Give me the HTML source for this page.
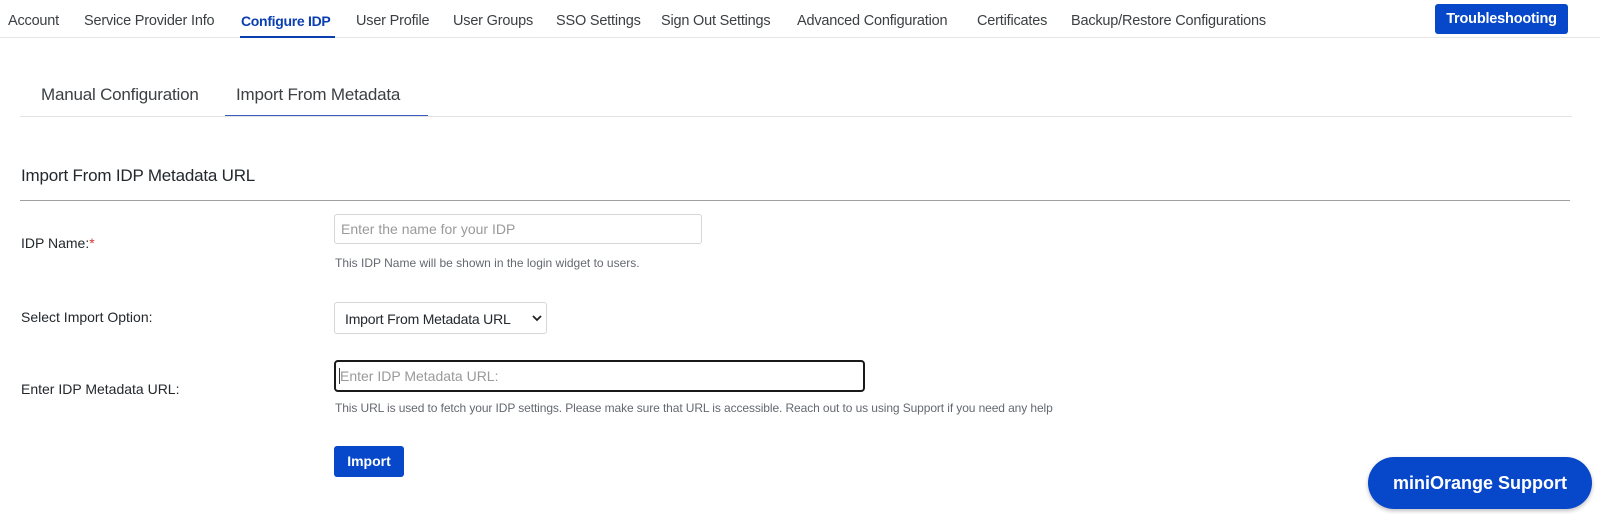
<!DOCTYPE html>
<html><head><meta charset="utf-8"><style>
html,body{margin:0;padding:0;width:1600px;height:514px;background:#fff;overflow:hidden;font-family:"Liberation Sans",Arial,sans-serif;}
.a{position:absolute;white-space:nowrap;}
.nav{top:13px;font-size:14.5px;color:#3c4043;letter-spacing:-0.2px}
.sub{top:85px;font-size:17px;color:#3c4043;letter-spacing:-0.2px}
.lbl{font-size:14px;color:#23282d;left:21px}
.help{font-size:12px;color:#646970;left:335px}
</style></head><body>
<div class="a nav" style="left:8px">Account</div>
<div class="a nav" style="left:84px">Service Provider Info</div>
<div class="a nav" style="left:241px;color:#0b3fb0;font-weight:bold;font-size:14px;letter-spacing:-0.3px">Configure IDP</div>
<div class="a nav" style="left:356px">User Profile</div>
<div class="a nav" style="left:453px">User Groups</div>
<div class="a nav" style="left:556px">SSO Settings</div>
<div class="a nav" style="left:661px">Sign Out Settings</div>
<div class="a nav" style="left:797px">Advanced Configuration</div>
<div class="a nav" style="left:977px">Certificates</div>
<div class="a nav" style="left:1071px">Backup/Restore Configurations</div>
<div class="a" style="left:0;top:37px;width:1600px;height:1px;background:#e6e6e6"></div>
<div class="a" style="left:240px;top:36px;width:95px;height:2px;background:#0b3fb0"></div>
<div class="a" style="left:1435px;top:4px;width:133px;height:30px;background:#0747c9;border-radius:3px;color:#fff;font-weight:bold;font-size:14.5px;line-height:30px;text-align:center;letter-spacing:-0.2px">Troubleshooting</div>

<div class="a sub" style="left:41px">Manual Configuration</div>
<div class="a sub" style="left:236px">Import From Metadata</div>
<div class="a" style="left:20px;top:116px;width:1552px;height:1px;background:#e3e3e3"></div>
<div class="a" style="left:225px;top:115px;width:203px;height:1px;background:#3b5bbf"></div>

<div class="a" style="left:21px;top:166px;font-size:17px;color:#23282d;letter-spacing:-0.2px">Import From IDP Metadata URL</div>
<div class="a" style="left:20px;top:200px;width:1550px;height:1px;background:#a0a0a0"></div>

<div class="a lbl" style="top:235px">IDP Name:<span style="color:#d63638">*</span></div>
<div class="a" style="left:334px;top:214px;width:368px;height:30px;border:1px solid #d6d6d6;border-radius:3px;box-sizing:border-box"></div>
<div class="a" style="left:341px;top:221px;font-size:14px;color:#9a9a9a">Enter the name for your IDP</div>
<div class="a help" style="top:256px">This IDP Name will be shown in the login widget to users.</div>

<div class="a lbl" style="top:309px">Select Import Option:</div>
<div class="a" style="left:334px;top:302px;width:213px;height:32px;border:1px solid #d6d6d6;border-radius:3px;box-sizing:border-box"></div>
<div class="a" style="left:345px;top:311px;font-size:14px;color:#23282d;letter-spacing:-0.2px">Import From Metadata URL</div>
<svg class="a" style="left:532px;top:314px" width="10" height="8"><path d="M1 2 L5 6 L9 2" stroke="#222" stroke-width="1.8" fill="none"/></svg>

<div class="a lbl" style="top:381px">Enter IDP Metadata URL:</div>
<div class="a" style="left:334px;top:360px;width:531px;height:32px;border:2px solid #1a1a1a;border-radius:4px;box-sizing:border-box"></div>
<div class="a" style="left:339px;top:368px;width:1px;height:16px;background:#333"></div>
<div class="a" style="left:340px;top:368px;font-size:14px;color:#9a9a9a">Enter IDP Metadata URL:</div>
<div class="a help" style="top:401px;letter-spacing:-0.1px">This URL is used to fetch your IDP settings. Please make sure that URL is accessible. Reach out to us using Support if you need any help</div>

<div class="a" style="left:334px;top:446px;width:70px;height:31px;background:#0747c9;border-radius:3px;color:#fff;font-weight:bold;font-size:14px;line-height:31px;text-align:center">Import</div>

<div class="a" style="left:1368px;top:457px;width:224px;height:52px;background:#0747c9;border-radius:26px;color:#fff;font-weight:bold;font-size:18px;line-height:52px;text-align:center;box-shadow:0 2px 4px rgba(0,0,0,0.25)">miniOrange Support</div>
</body></html>
